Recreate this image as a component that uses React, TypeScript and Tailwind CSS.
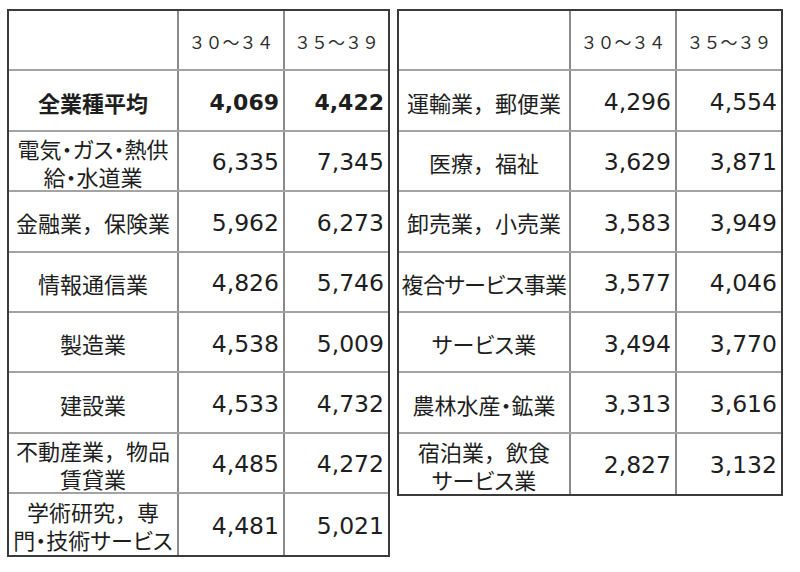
const JP = "font-['Noto_Sans_CJK_JP',sans-serif]";
const NUM = "font-['DejaVu_Sans','Noto_Sans_CJK_JP',sans-serif]";

type Row = { label: string[]; a: string; b: string; bold?: boolean; tight?: boolean };

const leftRows: Row[] = [
  { label: ["全業種平均"], a: "4,069", b: "4,422", bold: true },
  { label: ["電気・ガス・熱供", "給・水道業"], a: "6,335", b: "7,345" },
  { label: ["金融業，保険業"], a: "5,962", b: "6,273" },
  { label: ["情報通信業"], a: "4,826", b: "5,746" },
  { label: ["製造業"], a: "4,538", b: "5,009" },
  { label: ["建設業"], a: "4,533", b: "4,732" },
  { label: ["不動産業，物品", "賃貸業"], a: "4,485", b: "4,272" },
  { label: ["学術研究，専", "門・技術サービス"], a: "4,481", b: "5,021" },
];

const rightRows: Row[] = [
  { label: ["運輸業，郵便業"], a: "4,296", b: "4,554" },
  { label: ["医療，福祉"], a: "3,629", b: "3,871" },
  { label: ["卸売業，小売業"], a: "3,583", b: "3,949" },
  { label: ["複合サービス事業"], a: "3,577", b: "4,046", tight: true },
  { label: ["サービス業"], a: "3,494", b: "3,770" },
  { label: ["農林水産・鉱業"], a: "3,313", b: "3,616" },
  { label: ["宿泊業，飲食", "サービス業"], a: "2,827", b: "3,132" },
];

// full-width comma keeps its full cell, the rest is set proportional
function Line({ text }: { text: string }) {
  const parts = text.split("，");
  return (
    <span className="block whitespace-nowrap">
      {parts.map((p, i) => (
        <span key={i}>
          {p}
          {i < parts.length - 1 && (
            <span className="[font-feature-settings:normal]">，</span>
          )}
        </span>
      ))}
    </span>
  );
}

function Table({ rows, cols }: { rows: Row[]; cols: string }) {
  return (
    <div className="border-2 border-[#3b3b3b] bg-white">
      <div className={`grid ${cols} h-[60.4px] border-b-2 border-[#a3a3a3]`}>
        <div className="border-r-2 border-[#8a8a8a]" />
        <div
          className={`flex items-center justify-center border-r-2 border-[#8a8a8a] pt-1 text-[17px] text-[#2e2e2e] ${JP}`}
        >
          ３０～３４
        </div>
        <div className={`flex items-center justify-center pt-1 text-[17px] text-[#2e2e2e] ${JP}`}>
          ３５～３９
        </div>
      </div>
      {rows.map((r, i) => (
        <div
          key={i}
          className={`grid ${cols} h-[60.4px] ${
            i < rows.length - 1 ? "border-b-2 border-[#a3a3a3]" : ""
          }`}
        >
          <div
            className={`flex flex-col items-center justify-center border-r-2 border-[#8a8a8a] pt-0.5 text-center text-[22px] leading-[28px] text-[#1e1e1e] [font-feature-settings:'palt'] ${JP} ${
              r.bold ? "font-bold" : ""
            } ${r.tight ? "tracking-[-0.7px]" : ""}`}
          >
            {r.label.map((l, j) => (
              <Line key={j} text={l} />
            ))}
          </div>
          <div
            className={`flex items-center justify-end border-r-2 border-[#8a8a8a] pr-1 pt-1 text-[#1e1e1e] ${NUM} ${
              r.bold ? "text-[22px] font-bold" : "text-[23.5px]"
            }`}
          >
            {r.a}
          </div>
          <div
            className={`flex items-center justify-end pr-1 pt-1 text-[#1e1e1e] ${NUM} ${
              r.bold ? "text-[22px] font-bold" : "text-[23.5px]"
            }`}
          >
            {r.b}
          </div>
        </div>
      ))}
    </div>
  );
}

export default function App() {
  return (
    <div className="h-[572px] w-[800px] bg-white pl-[7px] pt-[9px]">
      <div className="flex items-start gap-[7px]">
        <div className="w-[383px]">
          <Table rows={leftRows} cols="grid-cols-[170px_106px_103px]" />
        </div>
        <div className="w-[386px]">
          <Table rows={rightRows} cols="grid-cols-[172px_106px_104px]" />
        </div>
      </div>
    </div>
  );
}
